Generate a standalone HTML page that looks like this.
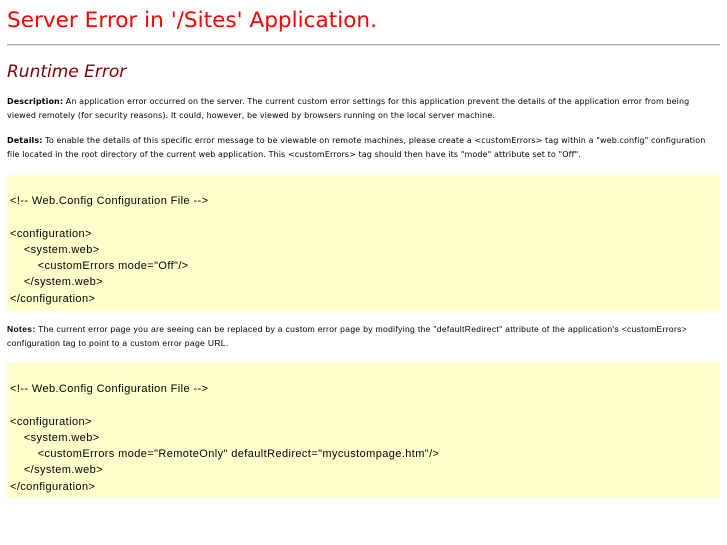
<!DOCTYPE html>
<html><head><meta charset="utf-8"><style>
body{margin:0;background:#fff;width:727px;height:545px;position:relative;overflow:hidden;font-family:"DejaVu Sans",sans-serif;color:#000}
.a{position:absolute;white-space:nowrap}
h1{position:absolute;left:7px;top:7px;margin:0;font-weight:normal;font-size:21.6px;color:#ff0000;font-family:"DejaVu Sans",sans-serif;line-height:28px}
hr{position:absolute;left:7px;top:44px;width:713px;margin:0;border:0;border-top:1px solid #aaa;border-bottom:1px solid #e4e4e4}
h2{position:absolute;left:7px;top:61px;margin:0;font-weight:normal;font-style:italic;font-size:17px;color:#800000;line-height:22px}
.p{font-size:8px;letter-spacing:0.1px;line-height:14px}
.n{font-family:"Liberation Sans",sans-serif;font-size:8.5px;letter-spacing:0.35px;line-height:14px}
.box{position:absolute;left:7px;width:713px;height:136px;background:#ffffcc}
.pre{position:absolute;left:10px;font-family:"Liberation Sans",sans-serif;font-size:11px;letter-spacing:0.4px;line-height:16.3px;white-space:pre;margin:0}
</style></head><body>
<h1>Server Error in '/Sites' Application.</h1>
<hr>
<h2>Runtime Error</h2>
<div class="a p" style="left:7px;top:95px"><b>Description:</b> An application error occurred on the server. The current custom error settings for this application prevent the details of the application error from being<br>viewed remotely (for security reasons). It could, however, be viewed by browsers running on the local server machine.</div>
<div class="a p" style="left:7px;top:134px"><b>Details:</b> To enable the details of this specific error message to be viewable on remote machines, please create a &lt;customErrors&gt; tag within a "web.config" configuration<br>file located in the root directory of the current web application. This &lt;customErrors&gt; tag should then have its "mode" attribute set to "Off".</div>
<div class="box" style="top:175px"></div>
<pre class="pre" style="top:193px">&lt;!-- Web.Config Configuration File --&gt;

&lt;configuration&gt;
    &lt;system.web&gt;
        &lt;customErrors mode="Off"/&gt;
    &lt;/system.web&gt;
&lt;/configuration&gt;</pre>
<div class="a n" style="left:7px;top:322px"><b>Notes:</b> The current error page you are seeing can be replaced by a custom error page by modifying the "defaultRedirect" attribute of the application's &lt;customErrors&gt;<br>configuration tag to point to a custom error page URL.</div>
<div class="box" style="top:362px"></div>
<pre class="pre" style="top:381px">&lt;!-- Web.Config Configuration File --&gt;

&lt;configuration&gt;
    &lt;system.web&gt;
        &lt;customErrors mode="RemoteOnly" defaultRedirect="mycustompage.htm"/&gt;
    &lt;/system.web&gt;
&lt;/configuration&gt;</pre>
</body></html>
